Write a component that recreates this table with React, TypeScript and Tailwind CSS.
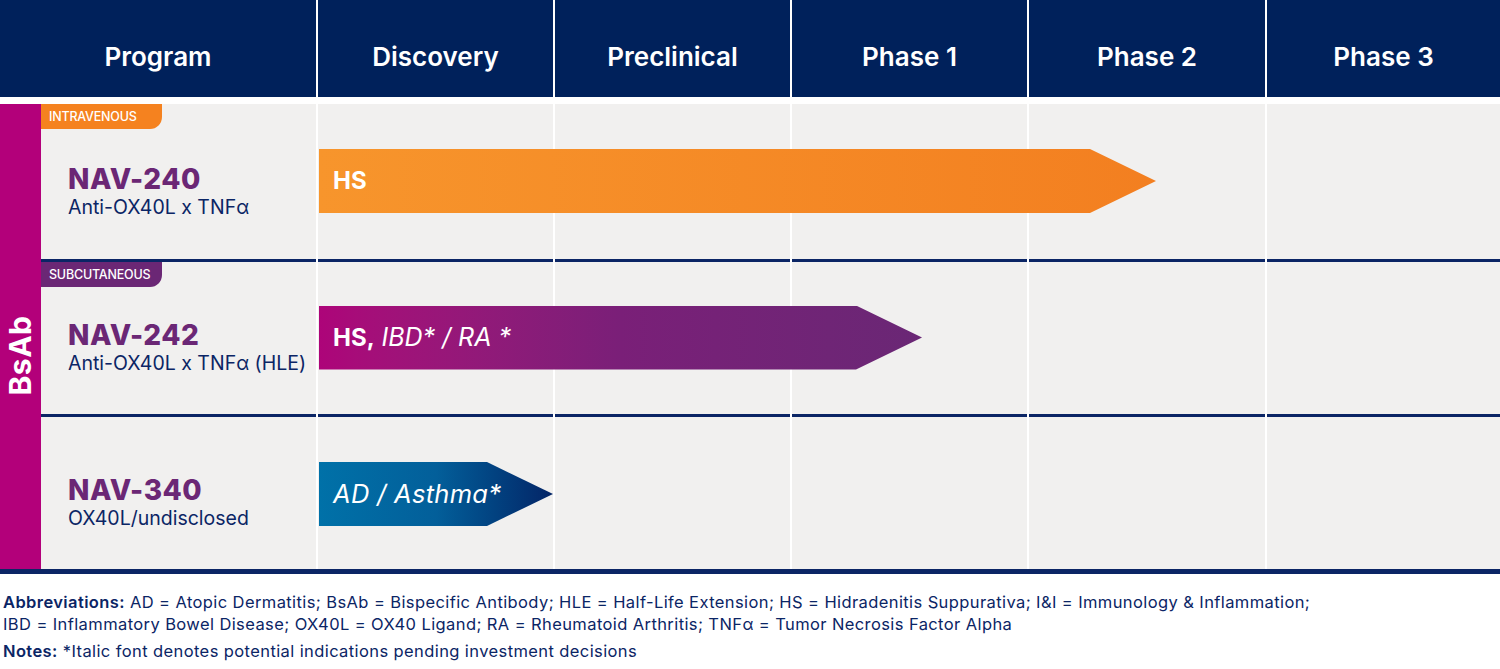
const font = { fontFamily: 'Inter, "Noto Sans", sans-serif' };

const phases = ['Discovery', 'Preclinical', 'Phase 1', 'Phase 2', 'Phase 3'];

interface RowProps {
  tag?: { label: string; className: string };
  name: string;
  target: string;
  height: string;
  bar: { width: number; className: string; label: React.ReactNode };
  last?: boolean;
}

function PipelineRow({ tag, name, target, height, bar, last }: RowProps) {
  const cellBorder = last ? '' : 'border-b-[3px] border-[#0b2565]';
  return (
    <div className={`relative grid grid-cols-[275px_235px_235px_235px_236px_1fr] gap-x-[2px] bg-white ${height}`}>
      <div className={`relative flex flex-col justify-center pl-[27px] pt-[18px] bg-[#f1f0ef] ${cellBorder}`}>
        {tag && (
          <div
            className={`absolute left-0 top-0 h-[25px] w-[121px] rounded-br-[12px] flex items-center pl-[8px] pt-[1px] text-[12.5px] font-medium text-white tracking-[-0.2px] ${tag.className}`}
          >
            {tag.label}
          </div>
        )}
        <div className="text-[28px] leading-[32px] font-extrabold text-[#6b2775] tracking-[0.5px]">{name}</div>
        <div className="text-[19.5px] leading-[24px] text-[#0b2565]">{target}</div>
      </div>
      {phases.map((p) => (
        <div key={p} className={`bg-[#f1f0ef] ${cellBorder}`} />
      ))}
      {/* stage bar sits over the phase columns */}
      <div
        className={`absolute left-[278px] top-1/2 -translate-y-1/2 ${last ? 'mt-[1px]' : 'mt-[-2px]'} h-[64px] flex items-center pl-[14px] text-white text-[24px] [clip-path:polygon(0_0,calc(100%-66px)_0,100%_50%,calc(100%-66px)_100%,0_100%)] ${bar.className}`}
        style={{ width: bar.width }}
      >
        {bar.label}
      </div>
    </div>
  );
}

export default function App() {
  return (
    <div className="w-[1500px] h-[669px] bg-white overflow-hidden" style={font}>
      {/* header */}
      <div className="grid grid-cols-[316px_235px_235px_235px_236px_1fr] gap-x-[2px] bg-white h-[97px]">
        <div className="bg-[#00215b] flex items-center justify-center text-white text-[26px] font-semibold pt-[16px]">
          Program
        </div>
        {phases.map((p) => (
          <div
            key={p}
            className="bg-[#00215b] flex items-center justify-center text-white text-[26px] font-semibold pt-[16px]"
          >
            {p}
          </div>
        ))}
      </div>
      <div className="h-[7px]" />

      {/* body */}
      <div className="flex h-[465px]">
        <div className="w-[41px] bg-[#b3007a] flex items-center justify-center">
          <span className="-rotate-90 text-white text-[30px] font-bold whitespace-nowrap tracking-[0.5px] mt-[38px]">
            BsAb
          </span>
        </div>
        <div className="flex-1 flex flex-col">
          <PipelineRow
            tag={{ label: 'INTRAVENOUS', className: 'bg-[#f5821f]' }}
            name="NAV-240"
            target="Anti-OX40L x TNFα"
            height="h-[158px]"
            bar={{
              width: 837,
              className: 'bg-gradient-to-r from-[#f7952c] to-[#f37f20]',
              label: <span className="font-bold">HS</span>,
            }}
          />
          <PipelineRow
            tag={{ label: 'SUBCUTANEOUS', className: 'bg-[#6b2775]' }}
            name="NAV-242"
            target="Anti-OX40L x TNFα (HLE)"
            height="h-[155px]"
            bar={{
              width: 603,
              className: 'bg-gradient-to-r from-[#ad0479] via-[#7a1f78] to-[#6a2775]',
              label: (
                <span>
                  <span className="font-bold">HS,</span>{' '}
                  <span className="italic text-[25px]">IBD* / RA *</span>
                </span>
              ),
            }}
          />
          <PipelineRow
            name="NAV-340"
            target="OX40L/undisclosed"
            height="flex-1"
            last
            bar={{
              width: 234,
              className: 'bg-gradient-to-r from-[#0071a8] via-[#035f9a] to-[#042567]',
              label: <span className="italic text-[25.5px] tracking-[0.3px]">AD / Asthma*</span>,
            }}
          />
        </div>
      </div>
      <div className="h-[5px] bg-[#0b2565]" />

      {/* footnotes */}
      <div className="pl-[3px] pt-[17px] text-[16.5px] text-[#0b2565] tracking-[0.4px]">
        <p className="leading-[22px]">
          <span className="font-semibold">Abbreviations:</span> AD = Atopic Dermatitis; BsAb = Bispecific Antibody; HLE
          = Half-Life Extension; HS = Hidradenitis Suppurativa; I&amp;I = Immunology &amp; Inflammation;
        </p>
        <p className="leading-[22px]">
          IBD = Inflammatory Bowel Disease; OX40L = OX40 Ligand; RA = Rheumatoid Arthritis; TNFα = Tumor Necrosis Factor
          Alpha
        </p>
        <p className="leading-[22px] mt-[5px]">
          <span className="font-semibold">Notes:</span> *Italic font denotes potential indications pending investment
          decisions
        </p>
      </div>
    </div>
  );
}
